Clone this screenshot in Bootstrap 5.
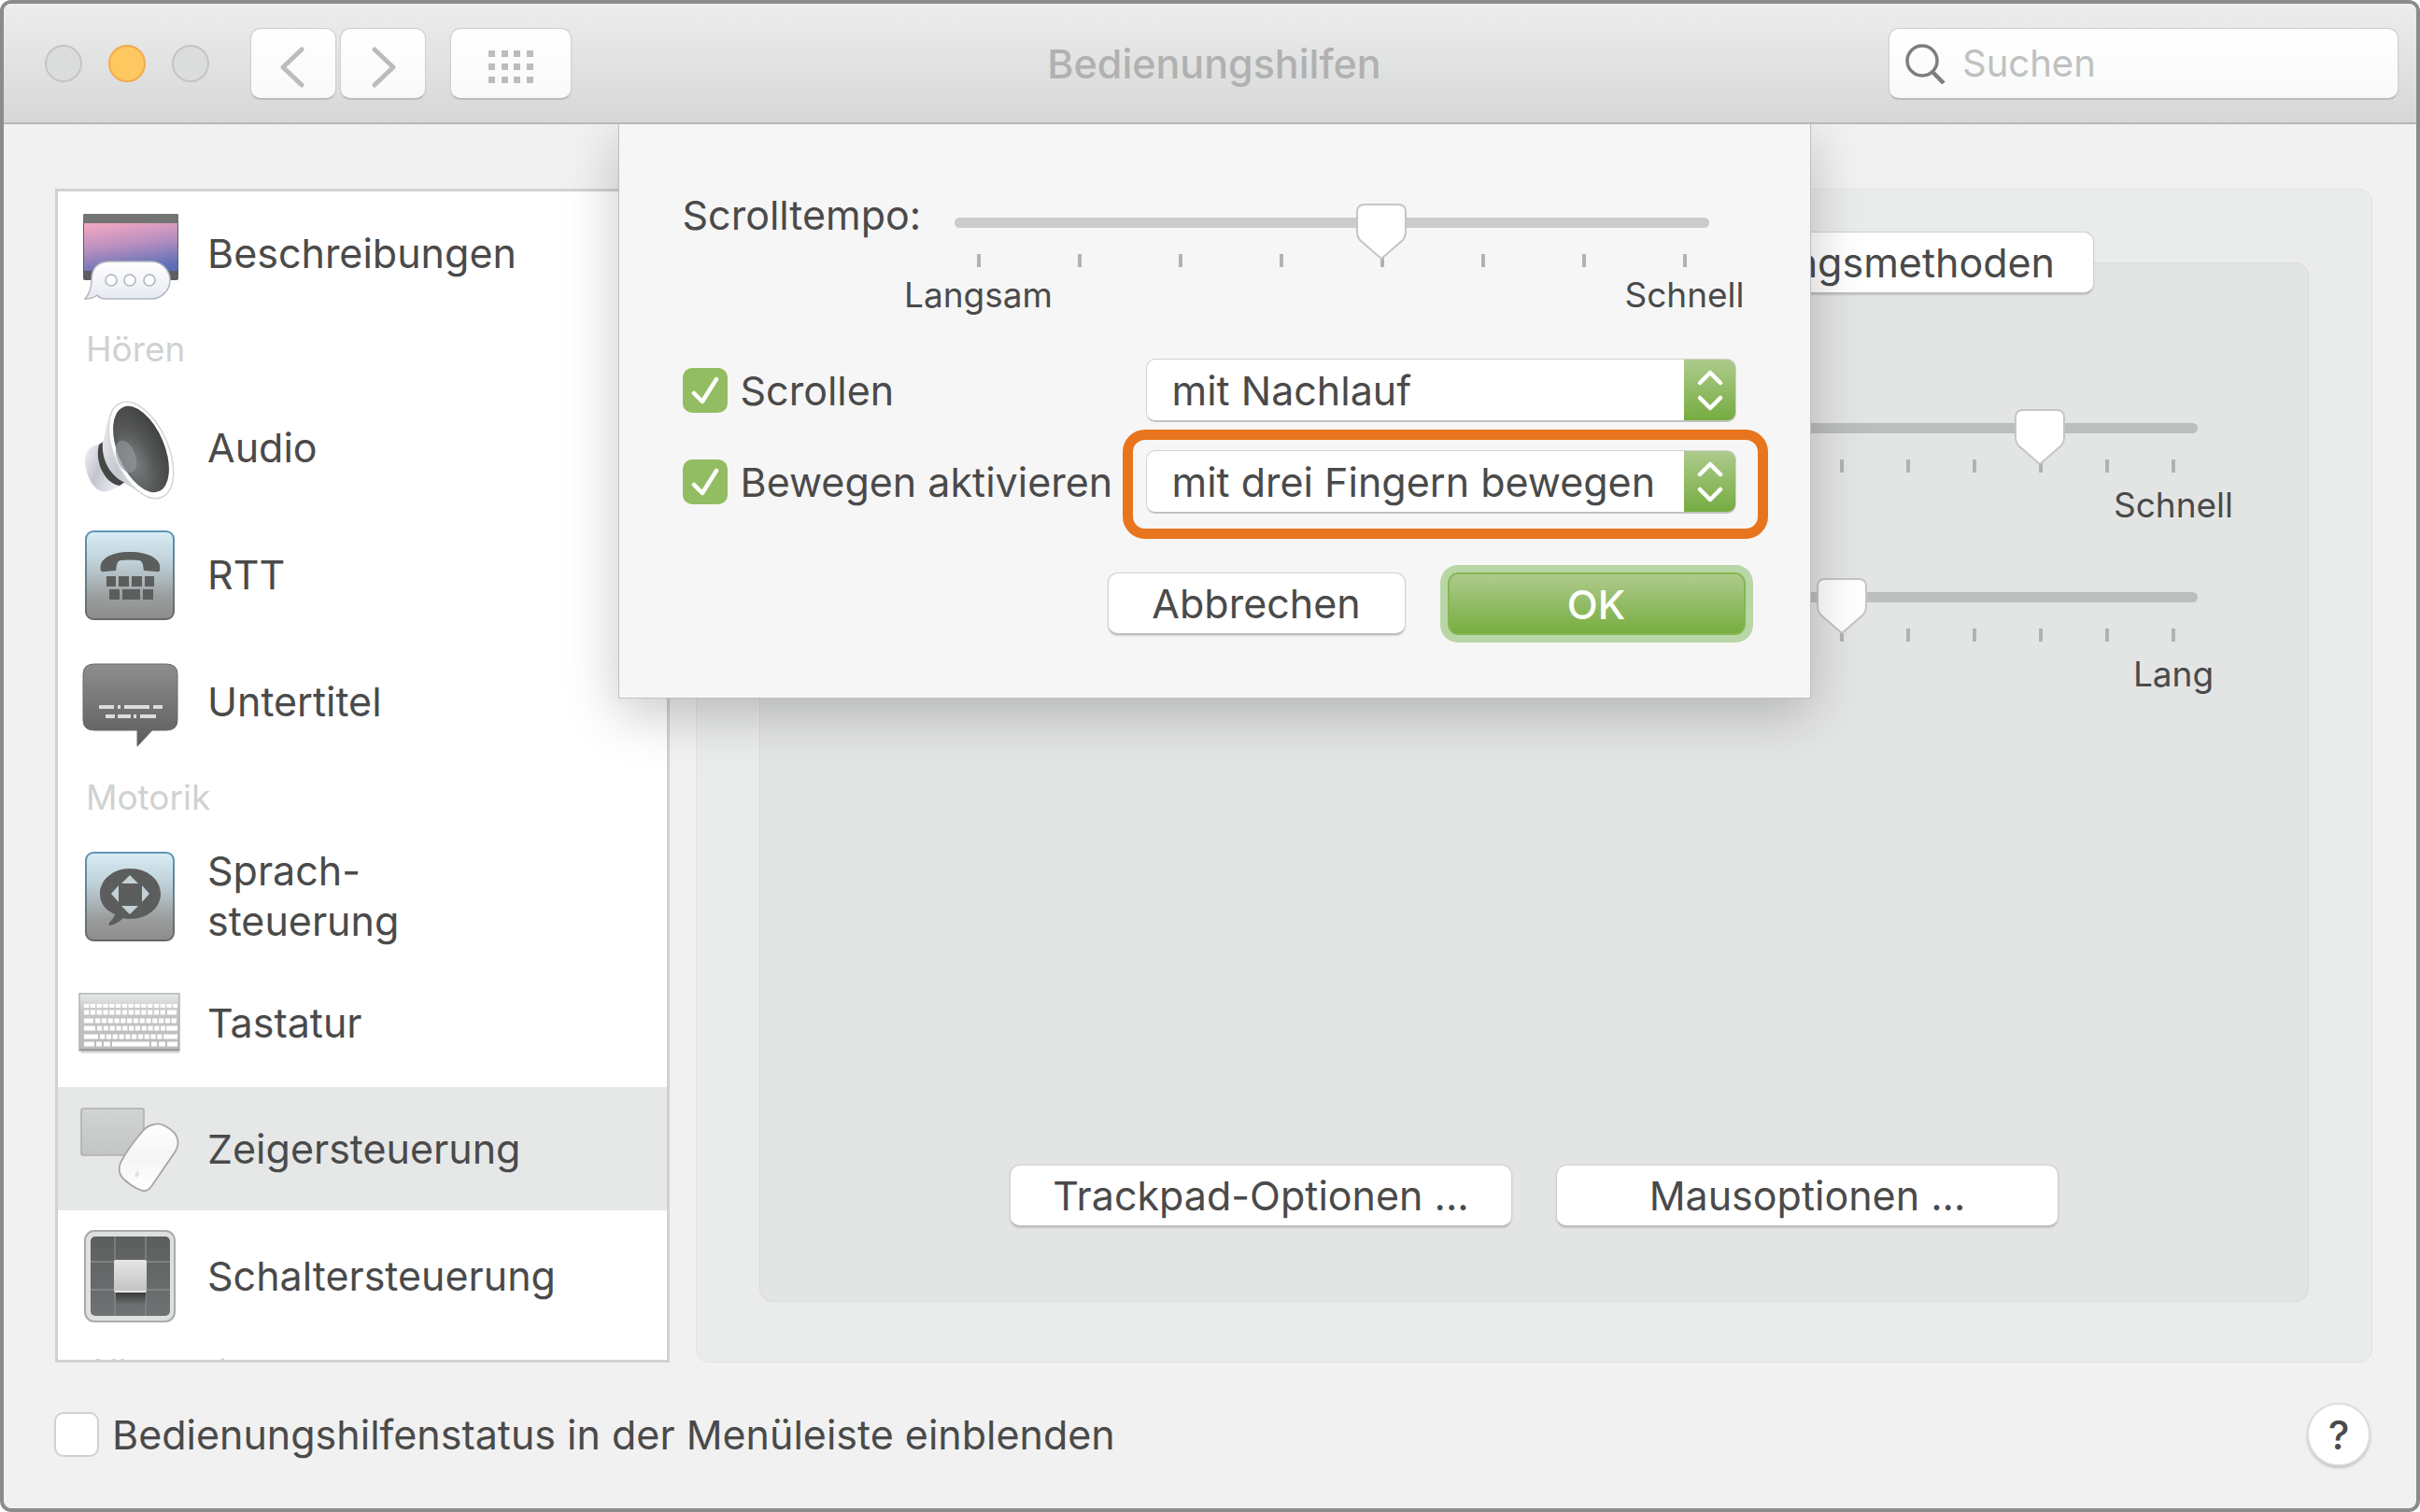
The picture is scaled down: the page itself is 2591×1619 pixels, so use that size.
<!DOCTYPE html>
<html lang="de">
<head>
<meta charset="utf-8">
<meta name="viewport" content="width=device-width, initial-scale=1">
<title>Bedienungshilfen</title>
<link href="https://cdn.jsdelivr.net/npm/bootstrap@5.3.0/dist/css/bootstrap.min.css" rel="stylesheet">
<style>
  :root { --ink: #4a4a4a; --rule: #d0d2d1; }
  body { font-family: Inter, "Liberation Sans", sans-serif; font-size: 43px; line-height: 56px; color: var(--ink); background: #fff; }
  label, button, select, input { color: var(--ink); }
  .app-window { border: 4px solid #8a8b8a; border-radius: 12px; background: #f1f1f1; }

  .titlebar { height: 129px; flex: none; padding: 0 19px 0 28px; background: linear-gradient(#ededed, #d6d7d7); border-bottom: 2px solid #b7b8b8; }
  .titlebar-side { flex: 1 1 0; }
  .lights { gap: 28px; margin-right: 44px; }
  .light { width: 40px; height: 40px; padding: 0; border: 2px solid #c3c5c4; border-radius: 50%; background: #dbdddc; }
  .light-min { background: #fec860; border-color: #f5a94c; }
  .tool { height: 76px; padding: 0; border: 1px solid #cfd0d0; border-bottom-color: #b4b6b5; border-radius: 11px; background: linear-gradient(#fff, #f8f9f9); box-shadow: 0 1px 1px #0002; }
  .tool-nav { width: 92px; }
  .tool-grid { width: 130px; margin-left: 26px; }
  .window-title { font-size: 43px; line-height: 56px; font-weight: 500; color: #b0b1b1; margin: 0; }
  .search { width: 546px; padding: 0 16px; gap: 18px; }
  .search input { font-size: 40px; border: 0; padding: 0; background: none; box-shadow: none; }
  .search input:focus { background: none; box-shadow: none; }
  .search input::placeholder { color: #bfc1c0; opacity: 1; }

  .content { padding: 69px 47px 0 55px; gap: 28px; min-height: 0; }
  .side-list { flex: none; width: 658px; border: 3px solid var(--rule); border-radius: 0; background: #fff; gap: 4px; overflow: hidden; }
  .side-row { flex: none; height: 132px; padding: 0 22px; gap: 28px; border: 0; color: var(--ink); background: none; line-height: 54px; }
  .side-row.active { background: #e6e7e7; color: var(--ink); margin: 0; }
  .side-row svg { width: 110px; height: 110px; flex: none; overflow: visible; }
  .side-head { flex: none; height: 68px; padding: 0 30px; font-size: 37px; line-height: 66px; color: #d0d1d1; }

  .pane { border: 1px solid #e0e2e1; border-radius: 14px; background: #eaebeb; padding: 45px 67px 64px; }
  .pane-inner { border: 1px solid #d9dbda; border-radius: 14px; background: #e3e5e4; margin-top: -34px; padding: 124px 118px 79px; }
  .push { min-height: 67px; padding: 0 20px; font-size: 43px; line-height: 62px; border: 1px solid #d0d2d2; border-bottom: 2px solid #bcbfbe; border-radius: 11px; background: #fff; color: var(--ink); box-shadow: 0 1px 2px #0002; }
  .tab-push { margin-right: 230px; padding: 0 41px; }
  .opt-push { width: 538px; }
  .opt-row { gap: 47px; }

  .range-block { width: 762px; }
  .range-second { margin-top: 56px; }
  .range-mac { appearance: none; -webkit-appearance: none; display: block; width: 100%; height: 60px; margin: 0; background: none; position: relative; z-index: 1; }
  .range-mac::-webkit-slider-runnable-track { height: 11px; margin-bottom: 19px; background: #bcbdbd; border-radius: 6px; }
  .range-mac::-webkit-slider-thumb { -webkit-appearance: none; width: 54px; height: 60px; margin-top: -15px; border: 0; border-radius: 0;
    background: url("data:image/svg+xml,%3Csvg xmlns='http://www.w3.org/2000/svg' viewBox='0 0 54 60'%3E%3Cpath d='M9 1h36q8 0 8 8v22q0 4-3 8L27 59 4 39q-3-4-3-8V9q0-8 8-8z' fill='%23fff' stroke='%23c4c6c5' stroke-width='2'/%3E%3C/svg%3E") center / 54px 60px no-repeat; }
  .ticks { margin-top: -6px; padding: 0 24px; }
  .ticks span { width: 4px; height: 14px; background: #b1b3b2; }
  .range-ends { margin: 13px -77px 0; font-size: 37px; line-height: 44px; }
  .range-ends span { width: 206px; text-align: center; }

  .sheet-layer { padding-left: 9px; pointer-events: none; }
  .sheet { width: 1277px; pointer-events: auto; background: #f6f6f6; border: 1px solid #bfc1c1; border-top: 0; padding: 69px 61px 67px 68px; box-shadow: 0 16px 54px #00000038; }
  .tempo-row { padding-right: 47px; }
  .sheet .range-block { width: 808px; margin-top: 16px; }
  .sheet .range-mac::-webkit-slider-runnable-track { background: #cacccb; }
  .sheet .range-ends { margin-top: 8px; }
  .check-mac { appearance: none; -webkit-appearance: none; flex: none; width: 48px; height: 48px; margin: 0; border: 2px solid #d0d2d1; border-radius: 10px; background: #fff; }
  .check-mac:checked { border-color: #93bd62; background: #93bd62 url("data:image/svg+xml,%3Csvg xmlns='http://www.w3.org/2000/svg' viewBox='0 0 48 48'%3E%3Cpath d='M12 27l9 9L36 12' fill='none' stroke='%23fff' stroke-width='4.5' stroke-linecap='round' stroke-linejoin='round'/%3E%3C/svg%3E") center / 48px 48px no-repeat; }
  .choice { flex: none; width: 632px; height: 68px; padding: 0 56px 0 27px; font-size: 43px; line-height: 62px; border: 1px solid #d0d2d1; border-bottom: 2px solid #c0c2c1; border-radius: 10px; appearance: none; -webkit-appearance: none;
    background: #fff url("data:image/svg+xml,%3Csvg xmlns='http://www.w3.org/2000/svg' viewBox='0 0 56 68'%3E%3Cdefs%3E%3ClinearGradient id='g' x2='0' y2='1'%3E%3Cstop stop-color='%23aecb8d'/%3E%3Cstop offset='1' stop-color='%2374ab3e'/%3E%3C/linearGradient%3E%3C/defs%3E%3Cpath d='M0 0h46q10 0 10 10v48q0 10-10 10H0z' fill='url(%23g)'/%3E%3Cpath d='M17 26l11-11 11 11M17 42l11 11 11-11' fill='none' stroke='%23fff' stroke-width='4.5' stroke-linecap='round' stroke-linejoin='round'/%3E%3C/svg%3E") right center / 56px 68px no-repeat border-box; }
  .options { margin-top: 31px; }
  .option-row { height: 98px; padding-right: 18px; }
  .option-row label { padding-left: 14px; white-space: nowrap; }
  .callout { position: absolute; inset: -22px -34px -27px -25px; border: 11px solid #e8751d; border-radius: 24px; pointer-events: none; }
  .dialog-actions { gap: 45px; }
  .push-dialog { width: 319px; }
  .push-ok { color: #fff; font-weight: 500; border: 2px solid #83b752; background: linear-gradient(#aecb8c, #77ad40); box-shadow: 0 0 0 8px #b9d6a6; }

  .footer-bar { padding: 43px 49px 45px 54px; }
  .footer-bar label { padding-left: 14px; }
  .help { width: 68px; height: 68px; padding: 0; border: 2px solid #dcdddd; border-radius: 50%; background: #fff; box-shadow: 0 2px 3px #0003; font-weight: 500; line-height: 60px; }
</style>
<script src="https://cdn.jsdelivr.net/npm/bootstrap@5.3.0/dist/js/bootstrap.bundle.min.js"></script>
</head>
<body>
<div class="app-window vh-100 d-flex flex-column overflow-hidden">

  <header class="titlebar d-flex align-items-center">
    <div class="titlebar-side d-flex align-items-center">
      <div class="lights d-flex ms-3">
        <button class="light" type="button" aria-label="Schließen"></button>
        <button class="light light-min" type="button" aria-label="Minimieren"></button>
        <button class="light" type="button" aria-label="Zoomen"></button>
      </div>
      <div class="d-flex gap-1">
        <button class="tool tool-nav" type="button" aria-label="Zurück"><svg width="30" height="44" viewBox="0 0 30 44"><path d="M24 3L4 22l20 19" fill="none" stroke="#bbbdbc" stroke-width="5" stroke-linecap="round" stroke-linejoin="round"/></svg></button>
        <button class="tool tool-nav" type="button" aria-label="Vor"><svg width="30" height="44" viewBox="0 0 30 44"><path d="M6 3l20 19L6 41" fill="none" stroke="#bbbdbc" stroke-width="5" stroke-linecap="round" stroke-linejoin="round"/></svg></button>
      </div>
      <button class="tool tool-grid" type="button" aria-label="Alle einblenden"><svg width="48" height="36" viewBox="0 0 48 36" fill="#bbbdbc"><path d="M0 0h7v7H0zM14 0h7v7h-7zM27 0h7v7h-7zM41 0h7v7h-7zM0 14h7v7H0zM14 14h7v7h-7zM27 14h7v7h-7zM41 14h7v7h-7zM0 28h7v7H0zM14 28h7v7h-7zM27 28h7v7h-7zM41 28h7v7h-7z"/></svg></button>
    </div>
    <h1 class="window-title">Bedienungshilfen</h1>
    <div class="titlebar-side d-flex justify-content-end">
      <div class="tool search d-flex align-items-center">
        <svg width="44" height="44" viewBox="0 0 44 44" class="flex-shrink-0" fill="none" stroke="#7c7d7d" stroke-width="3.5"><circle cx="19" cy="19" r="16"/><path d="M30 31l12 12" stroke-width="4.5"/></svg>
        <input class="form-control" type="text" placeholder="Suchen" aria-label="Suchen">
      </div>
    </div>
  </header>

  <main class="position-relative flex-grow-1 d-flex flex-column overflow-hidden">
    <div class="content d-flex flex-grow-1">

      <nav class="side-list list-group" aria-label="Kategorien">
        <a href="#" class="side-row list-group-item d-flex align-items-center">
          <svg viewBox="0 0 110 110"><defs><linearGradient id="sky" x1=".3" y1="0" x2=".6" y2="1"><stop stop-color="#eda6c2"/><stop offset=".45" stop-color="#b98fbf"/><stop offset="1" stop-color="#5a6fb5"/></linearGradient><linearGradient id="bub" x2="0" y2="1"><stop stop-color="#fff"/><stop offset="1" stop-color="#e6ebf1"/></linearGradient></defs>
            <rect x="5" y="13" width="102" height="71" rx="2" fill="#5e5e60"/><rect x="5" y="13" width="102" height="10" rx="2" fill="#747474"/><rect x="6" y="23" width="100" height="51" fill="url(#sky)"/>
            <path d="M34 64h44a20 20 0 0 1 0 40H30q-7 0-10-4-5 4-13 4 7-8 7-20 0-20 20-20z" fill="url(#bub)" stroke="#b4b8be" stroke-width="1.5"/><g fill="#fff" stroke="#b0b4b8" stroke-width="1.5"><circle cx="35" cy="84" r="6"/><circle cx="55" cy="84" r="6"/><circle cx="76" cy="84" r="6"/></g></svg>
          <span>Beschreibungen</span></a>
        <div class="side-head">Hören</div>
        <a href="#" class="side-row list-group-item d-flex align-items-center">
          <svg viewBox="0 0 110 110"><defs><linearGradient id="met" x1="0" y1="0" x2="1" y2=".6"><stop stop-color="#f3f4f7"/><stop offset=".5" stop-color="#c3c6ce"/><stop offset="1" stop-color="#e8eaee"/></linearGradient><radialGradient id="spk" cx=".25" cy=".6" r=".8"><stop stop-color="#7b8083"/><stop offset=".5" stop-color="#565857"/><stop offset="1" stop-color="#3f4140"/></radialGradient></defs>
            <path d="M22 52C8 54 4 66 9 82s15 24 25 19l12-5-22-44z" fill="url(#met)"/><path d="M22 52c-5 18 6 42 22 44l6-4L28 48z" fill="#454645"/>
            <path d="M38 12c-9 14-8 26-12 38-2 19 10 37 22 42 12 9 26 16 40 17z" fill="url(#met)"/>
            <ellipse cx="67" cy="58" rx="29" ry="55" transform="rotate(-24 67 58)" fill="#fff" stroke="#d3d5d9" stroke-width="1.5"/><ellipse cx="67" cy="57" rx="25" ry="49" transform="rotate(-23 67 57)" fill="url(#spk)"/><ellipse cx="51" cy="65" rx="10" ry="18" transform="rotate(-20 51 65)" fill="#8d9498" opacity=".7"/></svg>
          <span>Audio</span></a>
        <a href="#" class="side-row list-group-item d-flex align-items-center">
          <svg viewBox="0 0 110 110"><defs><linearGradient id="tile" x2="0" y2="1"><stop stop-color="#d9edf6"/><stop offset=".35" stop-color="#bfd1d8"/><stop offset=".75" stop-color="#9b9d9d"/><stop offset="1" stop-color="#8c8c8c"/></linearGradient><linearGradient id="edge" x2="0" y2="1"><stop stop-color="#5f95b4"/><stop offset="1" stop-color="#686868"/></linearGradient></defs>
            <rect x="8" y="9" width="94" height="94" rx="8" fill="url(#tile)" stroke="url(#edge)" stroke-width="2"/>
            <g fill="#5c5d5d"><path d="M24 51c-3-12 10-20 31-20s35 8 32 20q-1 2-4 1l-13-1q-1-11-5-11-10-1-20 0-4 0-5 11l-12 1q-3 1-4-1z"/><path d="M30 57h10v11H30zM43 57h11v11H43zM57 57h11v11H57zM71 57h10v11H71zM33 71h11v11H33zM47 71h19v11H47zM69 71h11v11H69z"/></g></svg>
          <span>RTT</span></a>
        <a href="#" class="side-row list-group-item d-flex align-items-center">
          <svg viewBox="0 0 110 110"><defs><linearGradient id="cap" x2="0" y2="1"><stop stop-color="#8e8e8e"/><stop offset="1" stop-color="#5c5c5c"/></linearGradient></defs>
            <path d="M17 15h77q12 0 12 11v49q0 11-12 11H79L63 103V86H17Q5 86 5 75V26q0-11 12-11z" fill="url(#cap)" stroke="#6a6a6a" stroke-width="1"/><path d="M22 61h16M42 61h3M49 61h27M80 61h10M29 71h10M42 71h14M59 71h3M66 71h17" stroke="#dcdcdc" stroke-width="4"/></svg>
          <span>Untertitel</span></a>
        <div class="side-head">Motorik</div>
        <a href="#" class="side-row list-group-item d-flex align-items-center">
          <svg viewBox="0 0 110 110"><rect x="8" y="9" width="94" height="94" rx="8" fill="url(#tile)" stroke="url(#edge)" stroke-width="2"/>
            <path d="M55 26c19 0 33 12 33 27S74 80 55 80q-4 0-7-1-7 7-15 8-1-1 0-3 5-5 6-9-16-7-16-22c0-15 14-27 32-27z" fill="#5c5d5d"/><g fill="#c3d1d7"><path d="M55 33l9 9H46zM55 75l9-9H46zM35 53l8-9v18zM76 53l-8-9v18z"/></g></svg>
          <span>Sprach-<br>steuerung</span></a>
        <a href="#" class="side-row list-group-item d-flex align-items-center">
          <svg viewBox="0 0 110 110"><defs><linearGradient id="kb" x2="0" y2="1"><stop stop-color="#e9eaea"/><stop offset=".3" stop-color="#c6c7c7"/><stop offset="1" stop-color="#b9baba"/></linearGradient></defs>
            <rect x="3" y="84" width="105" height="4" fill="#dedfdf"/><rect x="1" y="24" width="107" height="61" fill="url(#kb)" stroke="#b1b2b2" stroke-width="1.5"/><path d="M1 84h107" stroke="#9c9d9d" stroke-width="2"/>
            <g stroke="#fff" stroke-width="5"><path d="M6 37h100" stroke-width="4" stroke-dasharray="5.3 1.5"/><path d="M6 44h88" stroke-dasharray="5.3 1.5"/><path d="M95 44h10M6 53h10"/><path d="M18 53h88" stroke-dasharray="5.3 1.5"/><path d="M6 61h12M94 61h12"/><path d="M20 61h73" stroke-dasharray="5.3 1.5"/><path d="M6 70h15M91 70h15"/><path d="M23 70h67" stroke-dasharray="5.3 1.5"/><path d="M6 78h11M19 78h6M27 78h7M36 78h40M78 78h6M86 78h7M95 78h11"/></g></svg>
          <span>Tastatur</span></a>
        <a href="#" class="side-row list-group-item active d-flex align-items-center" aria-current="true">
          <svg viewBox="0 0 110 110"><defs><linearGradient id="pad" x2="0" y2="1"><stop stop-color="#d2d3d3"/><stop offset="1" stop-color="#c3c4c4"/></linearGradient><linearGradient id="mou" x2="0" y2="1"><stop stop-color="#fff"/><stop offset=".5" stop-color="#f5f5f5"/><stop offset="1" stop-color="#fff"/></linearGradient></defs>
            <rect x="3" y="12" width="67" height="50" rx="2" fill="url(#pad)" stroke="#adaeae" stroke-width="1.5"/>
            <path d="M81 29q6-2 14 3 10 6 11 13 2 6-3 14L79 94q-6 9-13 5-10-4-17-11-8-7-4-18 9-17 24-34 5-6 12-7z" fill="url(#mou)" stroke="#a5a6a6" stroke-width="1.8"/><path d="M60 83l4-5 1 5-3 3z" fill="#dfe0e0"/></svg>
          <span>Zeigersteuerung</span></a>
        <a href="#" class="side-row list-group-item d-flex align-items-center">
          <svg viewBox="0 0 110 110"><defs><linearGradient id="sw" x2="0" y2="1"><stop stop-color="#5c5e5e"/><stop offset="1" stop-color="#6f7274"/></linearGradient><linearGradient id="key" x2="0" y2="1"><stop stop-color="#e6e6e6"/><stop offset="1" stop-color="#c0c1c1"/></linearGradient><linearGradient id="shd" x2="0" y2="1"><stop stop-color="#3b3c3c"/><stop offset="1" stop-color="#3b3c3c" stop-opacity="0"/></linearGradient></defs>
            <rect x="7" y="7" width="96" height="97" rx="10" fill="#dfe0e0" stroke="#a9aaaa" stroke-width="2"/><rect x="13" y="13" width="85" height="85" rx="5" fill="url(#sw)"/><path d="M39 13v85M72 13v85M13 40h85M13 70h85" stroke="#888a8a" stroke-width="1.3"/><rect x="40" y="73" width="32" height="13" fill="url(#shd)"/><rect x="38" y="38" width="35" height="35" rx="2" fill="url(#key)"/><path d="M39 72h33" stroke="#f4f4f4" stroke-width="1.5"/></svg>
          <span>Schaltersteuerung</span></a>
        <div class="side-head">Allgemein</div>
      </nav>

      <section class="pane flex-grow-1 d-flex flex-column">
        <div class="d-flex justify-content-end position-relative z-1">
          <button class="push tab-push" type="button">Alternative Steuerungsmethoden</button>
        </div>
        <div class="pane-inner flex-grow-1 d-flex flex-column align-items-end">
          <div class="d-flex flex-column flex-grow-1 w-100 align-items-end">
            <div class="range-block mt-4 pt-2">
              <input class="range-mac" type="range" min="0" max="10" value="8" aria-label="Doppelklickintervall">
              <div class="ticks d-flex justify-content-between"><span></span><span></span><span></span><span></span><span></span><span></span><span></span><span></span><span></span><span></span><span></span></div>
              <div class="range-ends d-flex justify-content-end"><span>Schnell</span></div>
            </div>
            <div class="range-block range-second">
              <input class="range-mac" type="range" min="0" max="10" value="5" aria-label="Verzögerung">
              <div class="ticks d-flex justify-content-between"><span></span><span></span><span></span><span></span><span></span><span></span><span></span><span></span><span></span><span></span><span></span></div>
              <div class="range-ends d-flex justify-content-end"><span>Lang</span></div>
            </div>
          </div>
          <div class="opt-row d-flex justify-content-center w-100">
            <button class="push opt-push" type="button">Trackpad-Optionen ...</button>
            <button class="push opt-push" type="button">Mausoptionen ...</button>
          </div>
        </div>
      </section>
    </div>

    <footer class="footer-bar d-flex align-items-center">
      <input class="check-mac" type="checkbox" id="status">
      <label for="status">Bedienungshilfenstatus in der Menüleiste einblenden</label>
      <button class="help ms-auto" type="button" aria-label="Hilfe">?</button>
    </footer>

    <div class="sheet-layer position-absolute top-0 start-0 w-100 d-flex justify-content-center z-2">
      <form class="sheet" role="dialog" aria-label="Trackpad-Optionen">
        <div class="tempo-row d-flex justify-content-between align-items-start">
          <label for="tempo" class="text-nowrap">Scrolltempo:</label>
          <div class="range-block flex-shrink-0">
            <input class="range-mac" type="range" min="0" max="7" value="4" id="tempo">
            <div class="ticks d-flex justify-content-between"><span></span><span></span><span></span><span></span><span></span><span></span><span></span><span></span></div>
            <div class="range-ends d-flex justify-content-between"><span>Langsam</span><span>Schnell</span></div>
          </div>
        </div>
        <div class="options">
          <div class="option-row d-flex align-items-center">
            <input class="check-mac" type="checkbox" id="scrollen" checked>
            <label for="scrollen" class="me-auto">Scrollen</label>
            <select class="choice" aria-label="Scrollen"><option>mit Nachlauf</option></select>
          </div>
          <div class="option-row d-flex align-items-center">
            <input class="check-mac" type="checkbox" id="bewegen" checked>
            <label for="bewegen" class="me-auto">Bewegen aktivieren</label>
            <div class="position-relative d-flex">
              <select class="choice" aria-label="Bewegen aktivieren"><option>mit drei Fingern bewegen</option></select>
              <div class="callout"></div>
            </div>
          </div>
        </div>
        <div class="dialog-actions d-flex justify-content-end pt-5 pe-2">
          <button class="push push-dialog" type="button">Abbrechen</button>
          <button class="push push-dialog push-ok" type="button">OK</button>
        </div>
      </form>
    </div>
  </main>
</div>
</body>
</html>
